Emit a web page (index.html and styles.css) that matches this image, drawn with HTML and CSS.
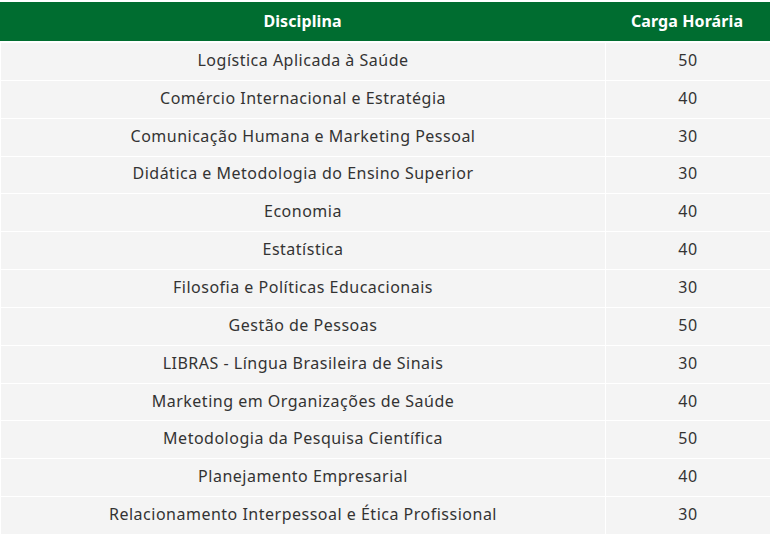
FILE: index.html
```
<!DOCTYPE html>
<html lang="pt-BR">
<head>
<meta charset="utf-8">
<link rel="stylesheet" href="styles.css">
</head>
<body>
<div class="table">
  <div class="row head">
    <div class="cell">Disciplina</div>
    <div class="cell">Carga Horária</div>
  </div>
  <div class="row"><div class="cell">Logística Aplicada à Saúde</div><div class="cell">50</div></div>
  <div class="row"><div class="cell">Comércio Internacional e Estratégia</div><div class="cell">40</div></div>
  <div class="row"><div class="cell">Comunicação Humana e Marketing Pessoal</div><div class="cell">30</div></div>
  <div class="row"><div class="cell">Didática e Metodologia do Ensino Superior</div><div class="cell">30</div></div>
  <div class="row"><div class="cell">Economia</div><div class="cell">40</div></div>
  <div class="row"><div class="cell">Estatística</div><div class="cell">40</div></div>
  <div class="row"><div class="cell">Filosofia e Políticas Educacionais</div><div class="cell">30</div></div>
  <div class="row"><div class="cell">Gestão de Pessoas</div><div class="cell">50</div></div>
  <div class="row"><div class="cell">LIBRAS - Língua Brasileira de Sinais</div><div class="cell">30</div></div>
  <div class="row"><div class="cell">Marketing em Organizações de Saúde</div><div class="cell">40</div></div>
  <div class="row"><div class="cell">Metodologia da Pesquisa Científica</div><div class="cell">50</div></div>
  <div class="row"><div class="cell">Planejamento Empresarial</div><div class="cell">40</div></div>
  <div class="row"><div class="cell">Relacionamento Interpessoal e Ética Profissional</div><div class="cell">30</div></div>
</div>
</body>
</html>
```
FILE: styles.css
```
html, body {
  margin: 0;
  padding: 0;
  background: #ffffff;
}
body {
  padding-top: 2px;
  font-family: "Noto Sans", "Open Sans", sans-serif;
  font-size: 16px;
  letter-spacing: 0.5px;
  color: #333333;
}
.table {
  width: 770px;
  display: flex;
  flex-direction: column;
}
.row {
  display: grid;
  grid-template-columns: 604px 1fr;
  column-gap: 1px;
  padding-left: 1px;
  height: 37.85px;
  box-sizing: border-box;
  border-top: 1px solid #ffffff;
}
.row .cell {
  background: #f4f4f4;
  display: flex;
  align-items: center;
  justify-content: center;
  white-space: nowrap;
  padding-bottom: 3px;
  box-sizing: border-box;
}
.row.head {
  height: 39px;
  border-top: 0;
  padding-left: 0;
  column-gap: 0;
  background: #006d30;
  margin-bottom: 1px;
}
.row.head .cell {
  background: transparent;
  color: #ffffff;
  font-weight: 700;
  font-size: 16px;
  letter-spacing: 0.1px;
  padding-bottom: 2px;
}
.row.head .cell:first-child {
  width: 605px;
}
```
